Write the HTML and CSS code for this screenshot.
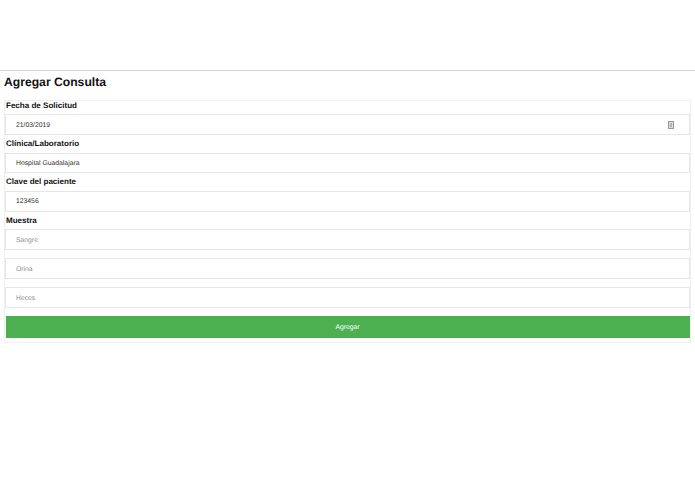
FILE: index.html
```html
<!DOCTYPE html>
<html lang="es">
<head>
<meta charset="utf-8">
<title>Agregar Consulta</title>
<link rel="stylesheet" href="styles.css">
</head>
<body>
<div class="top"></div>
<h2 class="title">Agregar Consulta</h2>
<form class="panel">
  <div class="label">Fecha de Solicitud</div>
  <div class="field date"><span>21/03/2019</span>
    <svg class="cal" width="6" height="8" viewBox="0 0 6 8"><rect x="0.5" y="0.5" width="5" height="7" fill="#ddd" stroke="#999"/><path d="M2 3h2M2 5h2" stroke="#888" stroke-width="1"/></svg>
  </div>
  <div class="label">Clínica/Laboratorio</div>
  <div class="field">Hospital Guadalajara</div>
  <div class="label">Clave del paciente</div>
  <div class="field">123456</div>
  <div class="label">Muestra</div>
  <div class="field ph">Sangre</div>
  <div class="field ph gap">Orina</div>
  <div class="field ph gap">Heces</div>
  <div class="btn">Agregar</div>
</form>
</body>
</html>
```
FILE: styles.css
```css
* { box-sizing: border-box; }
html, body { margin: 0; padding: 0; background: #fff; }
body { font-family: "Liberation Sans", Arial, sans-serif; color: #111; height: 494px; overflow: hidden; text-rendering: geometricPrecision; }
.top { height: 71px; border-bottom: 1px solid #d4d4d4; }
.title { margin: 0; padding: 3px 0 0 4px; height: 28.7px; font-size: 12.16px; line-height: 17px; font-weight: bold; }
.panel { display: flex; flex-direction: column; margin: 0 4px; height: 243px; border: 1px solid #f0f0f0; padding: 0; }
.label { height: 13.67px; padding-left: 1px; font-size: 8.04px; line-height: 10px; font-weight: bold; }
.field { height: 20.67px; margin-bottom: 4px; border: 1px solid #e6e6e6; padding: 0.85px 10px 0; font-size: 6.8px; color: #333; display: flex; align-items: center; justify-content: space-between; }
.field.ph { color: #8f8f8f; }
.field.gap { margin-top: 4.33px; }
.cal { margin-right: 5px; }
.btn { height: 21.7px; margin: 4.33px 0.5px 0; padding-top: 1px; background: #4caf50; color: #fff; font-size: 6.8px; display: flex; align-items: center; justify-content: center; }
```
